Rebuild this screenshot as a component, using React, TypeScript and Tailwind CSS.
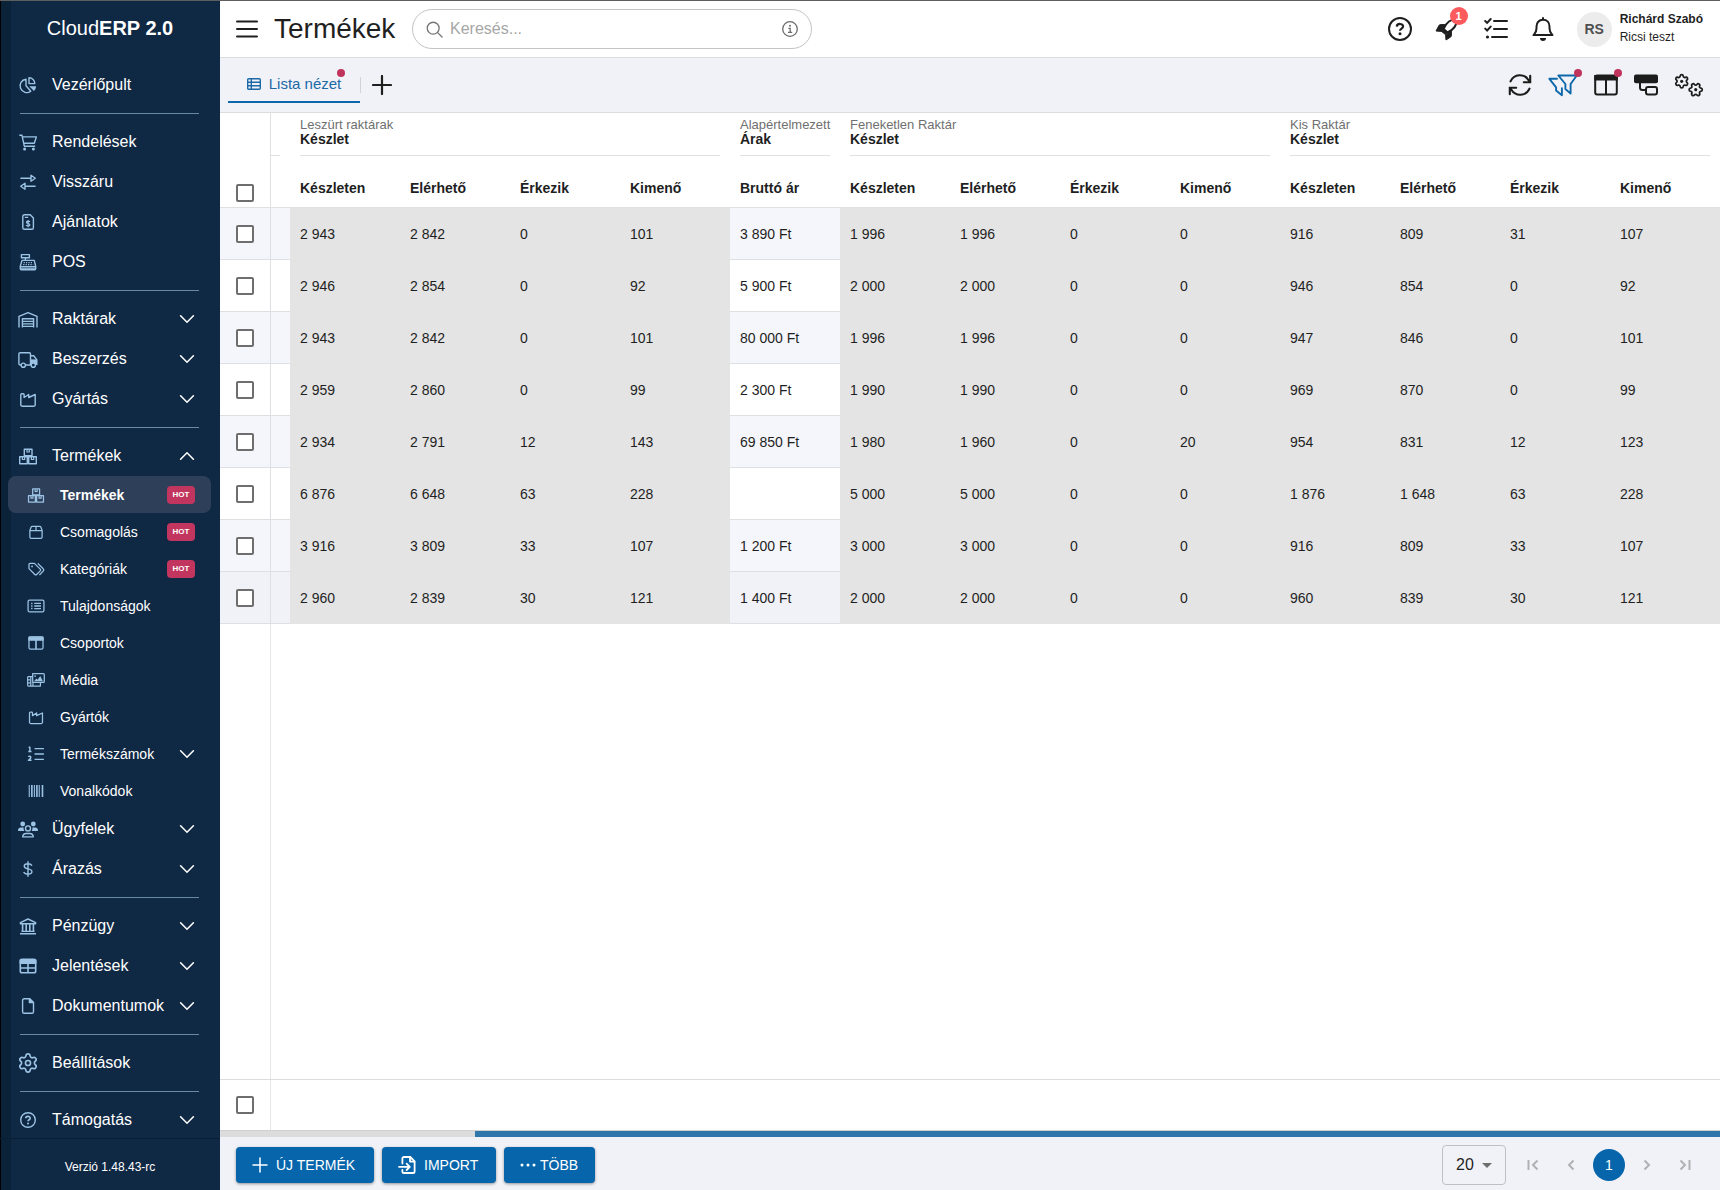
import React, { useState } from 'react';

interface IconProps {
  className?: string;
}

type IconType = React.FC<IconProps>;

// 20x20 outline icon used by the side menu
const make = (body: React.ReactNode): IconType => ({ className }) => (
  <svg
    viewBox="0 0 20 20"
    fill="none"
    stroke="currentColor"
    strokeWidth="1.4"
    strokeLinejoin="round"
    className={className}
    aria-hidden="true"
  >
    {body}
  </svg>
);

const PieIcon = make(
  <>
    <path d="M8 4.2A6.7 6.7 0 1 0 12.8 16.2L8 10.8Z" />
    <path d="M11 2.8v5.8h5.8A5.8 5.8 0 0 0 11 2.8Z" />
    <path d="M11.3 11.2h6.9a7 7 0 0 1-2.3 4.8Z" fill="currentColor" stroke="none" />
  </>
);
const CartIcon = make(
  <>
    <path d="M1.3 3.3H4l2.3 10.9h10.9M4.4 4.9h14l-2.1 6.4H5.8" />
    <circle cx="6.6" cy="17.1" r="1.5" fill="currentColor" stroke="none" />
    <circle cx="15.4" cy="17.1" r="1.5" fill="currentColor" stroke="none" />
  </>
);
const SwapIcon = make(<path d="M2.4 6.2H13M13 3.2l4.3 3-4.3 3ZM17.6 14.2H7M7 11.2l-4.3 3 4.3 3Z" />);
const InvoiceIcon = make(
  <>
    <path d="M6.4 2.7h5.8l3.2 3.2v9.8a1.6 1.6 0 0 1-1.6 1.6H6.4a1.6 1.6 0 0 1-1.6-1.6V4.3a1.6 1.6 0 0 1 1.6-1.6Z" />
    <path
      d="M6.8 5.3h3.4M12 9.9c-.5-.5-1.1-.7-1.9-.7-2.2 0-2.2 1.9 0 2.3 2.4.4 2.3 2.5 0 2.5-.9 0-1.6-.3-2.1-.8M10.1 8v7.2"
      strokeWidth="1.2"
    />
  </>
);
const RegisterIcon = make(
  <>
    <path d="M3.4 2.6h8v3.2h-8ZM7.4 5.8v2.6M4 8.4h12.2l1.5 5.8v2.6a.9.9 0 0 1-.9.9H3.2a.9.9 0 0 1-.9-.9v-2.6L4 8.4ZM2.4 14.6h15.2" />
    <path d="M5.6 10.6h9.2M5.2 12.6h10" strokeDasharray="1.2 1.2" strokeWidth="1.1" />
    <path d="M2.6 16.2h14.8" strokeWidth="1.2" />
  </>
);
const WarehouseIcon = make(
  <path d="M1 18.6V7.4L10 3.7l9 3.7v11.2M4.4 18.6V9.8h11.2v8.8M4.4 12.4h11.2M4.4 14.9h11.2M4.4 17.4h11.2" />
);
const TruckIcon = make(
  <>
    <path d="M3 16h-.8A1.3 1.3 0 0 1 .9 14.7V5a1.3 1.3 0 0 1 1.3-1.3h9A1.3 1.3 0 0 1 12.5 5v11H7.6M12.5 6.8h3.2l3 3.8V16" />
    <path d="M12.5 10.4h6.7V16h-6.7Z" fill="currentColor" stroke="none" />
    <circle cx="5.3" cy="16.2" r="2.1" />
    <circle cx="15.3" cy="16.2" r="2.1" fill="#0f2844" />
  </>
);
const FactoryIcon = make(
  <path d="M2.8 5.6a.9.9 0 0 1 .9-.9h1.5a.9.9 0 0 1 .9.9v2.9l4.6-3v3l6.5-3v10.2a1.6 1.6 0 0 1-1.6 1.6H4.4a1.6 1.6 0 0 1-1.6-1.6Z" />
);
const BoxesIcon = make(
  <>
    <path d="M6.3 3.2H14v6.6H6.3ZM1.7 10.8h7.6v7H1.7ZM10.7 10.8h7.6v7h-7.6Z" />
    <path d="M9 3.2V6h2.3V3.2M4.4 10.8v2.7h2.3v-2.7M13.4 10.8v2.7h2.3v-2.7" strokeWidth="1.2" />
  </>
);
const BoxIcon = make(
  <path d="M3.2 8.4 4.6 4.5a1.2 1.2 0 0 1 1.1-.8h8.6a1.2 1.2 0 0 1 1.1.8l1.4 3.9v7.2a1.4 1.4 0 0 1-1.4 1.4H4.6a1.4 1.4 0 0 1-1.4-1.4ZM3.2 8.4h13.6M10 3.7v4.7" />
);
const TagsIcon = make(
  <>
    <path d="M2.2 4.9v4.7l6.5 6.5a1.4 1.4 0 0 0 2 0l4-4a1.4 1.4 0 0 0 0-2L8.2 3.7H3.4a1.2 1.2 0 0 0-1.2 1.2Z" />
    <path d="m12 3.8 6 6a1.9 1.9 0 0 1 0 2.6l-4.2 4.3" />
    <circle cx="5.6" cy="7.1" r="1" fill="currentColor" stroke="none" />
  </>
);
const ListBoxIcon = make(
  <>
    <rect x="1.2" y="3.5" width="17.6" height="13" rx="1.6" />
    <path d="M8 7.2h7.5M8 10h7.5M8 12.8h7.5" />
    <path d="M4.6 7.2h1.5M4.6 10h1.5M4.6 12.8h1.5" strokeWidth="1.6" />
  </>
);
const ColumnsIcon = make(
  <>
    <rect x="2.2" y="3.3" width="15.6" height="13.6" rx="1.6" />
    <path d="M2.2 3.6h15.6v3.2H2.2Z" fill="currentColor" />
    <path d="M10 6v10.9" strokeWidth="1.8" />
  </>
);
const MediaIcon = make(
  <>
    <path d="M6.3 2.9h11.9a1 1 0 0 1 1 1v7.7a1 1 0 0 1-1 1H7.3a1 1 0 0 1-1-1Z" />
    <path d="m7.8 11.3 2.6-3 1.3 1.3 3-4 3 5.7Z" fill="currentColor" stroke="none" />
    <circle cx="9" cy="5.6" r="1" fill="currentColor" stroke="none" />
    <path
      d="M6.3 6.2H1.7a1 1 0 0 0-1 1v8.6a1 1 0 0 0 1 1h13.2v-4.2M4.2 6.2v10.6M.7 9.8h3.5M.7 13.2h3.5M6.6 12.6v4.2"
      strokeWidth="1.3"
    />
  </>
);
const NumbersIcon = make(
  <>
    <path d="M8.4 4h10.4M8.4 10h10.4M8.4 16h10.4" strokeWidth="1.6" />
    <path d="M1.8 2.6h1.4v4.5M1.4 7.2H5M1.5 13.3c.7-1.2 3-1 2.7.6-.2 1-1.8 2-2.6 3.1H5" strokeWidth="1.6" />
  </>
);
const BarcodeIcon = make(
  <>
    <path d="M2.5 3.2v13.6M8.2 3.2v13.6M13.6 3.2v13.6" strokeWidth="1.2" />
    <path d="M5.4 3.2v13.6M11 3.2v13.6M17.2 3.2v13.6" strokeWidth="1.8" />
  </>
);
const UsersIcon = make(
  <>
    <circle cx="4.7" cy="5" r="2.4" fill="currentColor" stroke="none" />
    <circle cx="15.3" cy="5" r="2.4" fill="currentColor" stroke="none" />
    <path
      d="M0 11.4a3 3 0 0 1 3-3h2.6a5 5 0 0 0 .7 3.5H.4ZM20 11.4a3 3 0 0 0-3-3h-2.6a5 5 0 0 1-.7 3.5h5.9Z"
      fill="currentColor"
      stroke="none"
    />
    <circle cx="10" cy="9.4" r="2.5" />
    <path d="M4.7 17.9a3.6 3.6 0 0 1 3.6-3.4h3.4a3.6 3.6 0 0 1 3.6 3.4Z" />
  </>
);
const DollarIcon = make(
  <path d="M14 6.7c-.8-1.3-2.2-1.9-4-1.9-5 0-5 4.4-.2 5.1 5.6.8 5.3 5.3.2 5.3-2 0-3.6-.7-4.4-2M10 2.2v15.6" />
);
const BankIcon = make(
  <>
    <path d="M2.4 7.8V6.6L10 3l7.6 3.6v1.2ZM3.4 15.4h13.2M2 17.7h16" />
    <path d="M4.6 8v7M8.2 8v7M11.8 8v7M15.4 8v7" strokeWidth="1.6" />
  </>
);
const TableIcon = make(
  <>
    <rect x="2.3" y="3.3" width="15.4" height="13.4" rx="1.8" strokeWidth="1.6" />
    <path d="M2.3 4h15.4v3.2H2.3Z" fill="currentColor" />
    <path d="M10 7v9.7M2.3 12h15.4" strokeWidth="1.6" />
  </>
);
const FileIcon = make(
  <>
    <path d="M6.2 2.7h5.6l3.7 3.7v9.3a1.6 1.6 0 0 1-1.6 1.6H6.2a1.6 1.6 0 0 1-1.6-1.6V4.3a1.6 1.6 0 0 1 1.6-1.6Z" />
    <path d="M11.4 2.9v3.7h3.9Z" fill="currentColor" />
  </>
);
const HelpIcon = make(
  <>
    <circle cx="10" cy="10" r="7.3" />
    <path d="M7.7 8.2c.1-2.5 4.6-2.4 4.5 0 0 1.5-2.2 1.6-2.2 3.1" strokeWidth="1.6" />
    <circle cx="10" cy="13.5" r="1" fill="currentColor" stroke="none" />
  </>
);

// six-lobed gear outline on a 24x24 grid
const GEAR_PATH =
  'M9.671 4.136a2.34 2.34 0 0 1 4.659 0 2.34 2.34 0 0 0 3.319 1.915 2.34 2.34 0 0 1 2.33 4.033 2.34 2.34 0 0 0 0 3.831 2.34 2.34 0 0 1-2.33 4.033 2.34 2.34 0 0 0-3.319 1.915 2.34 2.34 0 0 1-4.659 0 2.34 2.34 0 0 0-3.32-1.915 2.34 2.34 0 0 1-2.33-4.033 2.34 2.34 0 0 0 0-3.831A2.34 2.34 0 0 1 6.35 6.051a2.34 2.34 0 0 0 3.319-1.915';

const GearIcon: IconType = ({ className }) => (
  <svg viewBox="1 1 22 22" fill="none" stroke="currentColor" strokeWidth="1.8" className={className} aria-hidden="true">
    <path d={GEAR_PATH} />
    <circle cx="12" cy="12" r="2.8" />
  </svg>
);

interface SubItem {
  label: string;
  icon: IconType;
  hot?: boolean;
  active?: boolean;
  expand?: boolean;
}

interface MenuItem {
  label: string;
  icon: IconType;
  expand?: 'down' | 'up';
  children?: SubItem[];
}

const PRODUCT_ITEMS: SubItem[] = [
  { label: 'Termékek', icon: BoxesIcon, hot: true, active: true },
  { label: 'Csomagolás', icon: BoxIcon, hot: true },
  { label: 'Kategóriák', icon: TagsIcon, hot: true },
  { label: 'Tulajdonságok', icon: ListBoxIcon },
  { label: 'Csoportok', icon: ColumnsIcon },
  { label: 'Média', icon: MediaIcon },
  { label: 'Gyártók', icon: FactoryIcon },
  { label: 'Termékszámok', icon: NumbersIcon, expand: true },
  { label: 'Vonalkódok', icon: BarcodeIcon },
];

const MENU: MenuItem[][] = [
  [{ label: 'Vezérlőpult', icon: PieIcon }],
  [
    { label: 'Rendelések', icon: CartIcon },
    { label: 'Visszáru', icon: SwapIcon },
    { label: 'Ajánlatok', icon: InvoiceIcon },
    { label: 'POS', icon: RegisterIcon },
  ],
  [
    { label: 'Raktárak', icon: WarehouseIcon, expand: 'down' },
    { label: 'Beszerzés', icon: TruckIcon, expand: 'down' },
    { label: 'Gyártás', icon: FactoryIcon, expand: 'down' },
  ],
  [
    { label: 'Termékek', icon: BoxesIcon, expand: 'up', children: PRODUCT_ITEMS },
    { label: 'Ügyfelek', icon: UsersIcon, expand: 'down' },
    { label: 'Árazás', icon: DollarIcon, expand: 'down' },
  ],
  [
    { label: 'Pénzügy', icon: BankIcon, expand: 'down' },
    { label: 'Jelentések', icon: TableIcon, expand: 'down' },
    { label: 'Dokumentumok', icon: FileIcon, expand: 'down' },
  ],
  [{ label: 'Beállítások', icon: GearIcon }],
  [{ label: 'Támogatás', icon: HelpIcon, expand: 'down' }],
];

const STOCK_COLUMNS = ['Készleten', 'Elérhető', 'Érkezik', 'Kimenő'];

const GROUPS = [
  { caption: 'Leszürt raktárak', title: 'Készlet', columns: STOCK_COLUMNS },
  { caption: 'Alapértelmezett', title: 'Árak', columns: ['Bruttó ár'] },
  { caption: 'Feneketlen Raktár', title: 'Készlet', columns: STOCK_COLUMNS },
  { caption: 'Kis Raktár', title: 'Készlet', columns: STOCK_COLUMNS },
];

const PRICE_INDEX = 4;

const ROWS: string[][] = [
  ['2 943', '2 842', '0', '101', '3 890 Ft', '1 996', '1 996', '0', '0', '916', '809', '31', '107'],
  ['2 946', '2 854', '0', '92', '5 900 Ft', '2 000', '2 000', '0', '0', '946', '854', '0', '92'],
  ['2 943', '2 842', '0', '101', '80 000 Ft', '1 996', '1 996', '0', '0', '947', '846', '0', '101'],
  ['2 959', '2 860', '0', '99', '2 300 Ft', '1 990', '1 990', '0', '0', '969', '870', '0', '99'],
  ['2 934', '2 791', '12', '143', '69 850 Ft', '1 980', '1 960', '0', '20', '954', '831', '12', '123'],
  ['6 876', '6 648', '63', '228', '', '5 000', '5 000', '0', '0', '1 876', '1 648', '63', '228'],
  ['3 916', '3 809', '33', '107', '1 200 Ft', '3 000', '3 000', '0', '0', '916', '809', '33', '107'],
  ['2 960', '2 839', '30', '121', '1 400 Ft', '2 000', '2 000', '0', '0', '960', '839', '30', '121'],
];

const Chevron: React.FC<{ up?: boolean }> = ({ up }) => (
  <svg
    viewBox="0 0 16 10"
    fill="none"
    stroke="#fff"
    strokeWidth="1.6"
    strokeLinecap="round"
    className="h-[10px] w-4 shrink-0"
    aria-hidden="true"
  >
    <path d={up ? 'M1.6 8.2 8 1.8l6.4 6.4' : 'M1.6 1.8 8 8.2l6.4-6.4'} />
  </svg>
);

const Sidebar: React.FC = () => (
  <aside className="flex w-[220px] shrink-0 flex-col bg-[linear-gradient(to_right,#000_1px,#0b2339_1px,#0b2339_11px,#0f2844_11px)] text-white">
    <div className="flex h-16 shrink-0 items-start justify-center pt-[13px] text-xl leading-[28px]">
      <span>Cloud<b>ERP 2.0</b></span>
    </div>
    <nav className="min-h-0 flex-1 overflow-hidden">
      {MENU.map((section, index) => (
        <React.Fragment key={index}>
          {index > 0 && <hr className="ml-5 mr-[21px] my-2 border-[#6a89a5]" />}
          {section.map((item) => (
            <React.Fragment key={item.label}>
              <a href="#" className="flex h-10 items-center pl-[18px] pr-[25px]">
                <item.icon className="mr-[14px] size-5 shrink-0 text-[#9cc3e4]" />
                <span className="flex-1 text-base">{item.label}</span>
                {item.expand && <Chevron up={item.expand === 'up'} />}
              </a>
              {item.children?.map((sub) => (
                <a
                  key={sub.label}
                  href="#"
                  className={`ml-2 mr-[9px] flex h-[37px] items-center rounded-lg pl-[19px] pr-4 text-sm ${sub.active ? 'bg-[#2e3f5a] font-bold' : ''}`}
                >
                  <sub.icon className="mr-[15px] size-[18px] shrink-0 text-[#9cc3e4]" />
                  <span className="flex-1">{sub.label}</span>
                  {sub.hot && (
                    <span className="flex h-[18px] w-7 items-center justify-center rounded bg-[#c2355f] text-[8px] font-bold">HOT</span>
                  )}
                  {sub.expand && <Chevron />}
                </a>
              ))}
            </React.Fragment>
          ))}
        </React.Fragment>
      ))}
    </nav>
    <div className="flex h-[52px] shrink-0 items-center justify-center border-t border-[#0a1f36] pt-1 text-xs">Verzió 1.48.43-rc</div>
  </aside>
);

const Header: React.FC = () => (
  <header className="flex h-[57px] shrink-0 items-center border-b border-[#dcdcdc] pl-4 pr-[17px]">
    <button type="button" aria-label="Menü" className="mr-4">
      <svg viewBox="0 0 22 18" className="h-[18px] w-[22px]" stroke="#1f1f1f" strokeWidth="2" strokeLinecap="round">
        <path d="M1 1.5h20M1 9h20M1 16.5h20" />
      </svg>
    </button>
    <h1 className="w-[138px] text-[28px] leading-9">Termékek</h1>
    <label className="flex h-10 w-[400px] items-center rounded-full border border-[#c4c4c4] pl-[13px] pr-[13px]">
      <svg
        viewBox="0 0 18 18"
        className="mr-[7px] size-[17px] shrink-0"
        fill="none"
        stroke="#757575"
        strokeWidth="1.4"
        strokeLinecap="round"
      >
        <circle cx="7.6" cy="7.6" r="6.3" />
        <path d="m12.3 12.3 4.7 4.7" />
      </svg>
      <input
        type="text"
        aria-label="Keresés"
        placeholder="Keresés..."
        className="min-w-0 flex-1 text-base outline-none placeholder:text-[#a6a6a6]"
      />
      <svg viewBox="0 0 16 16" className="size-4 shrink-0" fill="none" stroke="#6b6b6b" strokeWidth="1.3">
        <circle cx="8" cy="8" r="7.3" />
        <path d="M6.4 7.3h1.8v4M6 11.4h4.2" />
        <circle cx="8" cy="4.7" r="1" fill="#6b6b6b" stroke="none" />
      </svg>
    </label>
    <div className="ml-auto flex items-center">
      <button type="button" aria-label="Súgó" className="mr-[23px]">
        <svg viewBox="0 0 24 24" className="size-6" fill="none" stroke="#1f1f1f" strokeWidth="2">
          <circle cx="12" cy="12" r="11" />
          <path d="M8.8 9.6c.1-3.600 6.400-3.400 6.300 0 0 2.100-3.100 2.100-3.100 4.200" strokeWidth="2.2" />
          <circle cx="12" cy="16.8" r="1.5" fill="#1f1f1f" stroke="none" />
        </svg>
      </button>
      <button type="button" aria-label="Újdonságok" className="relative mr-[25px]">
        <svg viewBox="0 0 24 24" className="size-6" fill="none" stroke="#1f1f1f" strokeWidth="2" strokeLinejoin="round">
          <path d="M8.5 12C11 6 15 2 22 2c0 7-4 11-9.5 13.5Z" />
          <path
            d="M10.5 7.6H5.3c-.6 0-1 .3-1.3.8L1 14l5.8.4M16.4 13.5v5.2c0 .6-.3 1-.8 1.300L11 23l-.4-5.300"
            fill="#1f1f1f"
            strokeWidth="1"
          />
          <path d="m6.6 14.400 4 3.300 2.400-2.200-4.500-4Z" fill="#1f1f1f" strokeWidth="1" />
        </svg>
        <span className="absolute -top-[10px] left-[15px] flex size-[18px] items-center justify-center rounded-full bg-[#fc5a5c] text-[11px] font-bold text-white">
          1
        </span>
      </button>
      <button type="button" aria-label="Feladatok" className="mr-[23px]">
        <svg viewBox="0 0 24 24" className="size-6" fill="none" stroke="#1f1f1f" strokeWidth="2" strokeLinecap="round">
          <path d="M10 4h13M10 12h13M8 20h15" />
          <path d="m1.200 4 1.900 1.900L6.700 2M1.200 11.600l1.900 1.900 3.600-3.900" />
          <circle cx="3.5" cy="20" r="1.6" fill="#1f1f1f" stroke="none" />
        </svg>
      </button>
      <button type="button" aria-label="Értesítések" className="mr-[22px]">
        <svg
          viewBox="0 0 24 24"
          className="size-6"
          fill="none"
          stroke="#1f1f1f"
          strokeWidth="2"
          strokeLinejoin="round"
          strokeLinecap="round"
        >
          <path d="M12 2.800c-4.100 0-6.500 3-6.500 6.700v1.800c0 2.200-.7 4-2.200 5.800l-.8 1h19l-.8-1c-1.500-1.800-2.200-3.600-2.200-5.800V9.500c0-3.700-2.400-6.700-6.500-6.700ZM12 1v1.700" />
          <path d="M9 21h6a3 3 0 0 1-6 0Z" fill="#1f1f1f" stroke="none" />
        </svg>
      </button>
      <div className="mr-2 flex size-[35px] items-center justify-center rounded-full bg-[#ececec] text-sm font-bold text-[#4f4f4f]">RS</div>
      <div className="pb-0.5 text-xs leading-[18px]">
        <div className="font-bold">Richárd Szabó</div>
        <div>Ricsi teszt</div>
      </div>
    </div>
  </header>
);

const Dot: React.FC = () => <span className="absolute -right-1 -top-1 size-2 rounded-full bg-[#bf335c]" />;

const Toolbar: React.FC = () => (
  <div className="flex h-[55px] shrink-0 items-center border-b border-[#dcdcdc] bg-[#f1f2f7] pl-2 pr-4">
    <button
      type="button"
      className="mb-[9px] flex h-9 w-[132px] items-center justify-center gap-2 self-end border-b-2 border-[#0d68ab] text-[15px] text-[#1c69a6]"
    >
      <svg viewBox="0 0 14 12" className="h-3 w-[14px]" fill="none" stroke="#1c69a6" strokeWidth="1.4">
        <rect x=".7" y=".7" width="12.6" height="10.6" rx="1" />
        <path d="M.7 4.200h12.600M.7 7.800h12.600M4.300.7v10.600" />
      </svg>
      <span className="relative">
        Lista nézet
        <Dot />
      </span>
    </button>
    <span className="h-4 w-px bg-[#d2d3d8]" />
    <button type="button" aria-label="Új nézet" className="ml-[11px]">
      <svg viewBox="0 0 20 20" className="size-5" stroke="#1f1f1f" strokeWidth="2.2" strokeLinecap="round">
        <path d="M10 1v18M1 10h18" />
      </svg>
    </button>
    <div className="ml-auto flex items-center text-[#1c1c1c]">
      <button type="button" aria-label="Frissítés" className="mr-4">
        <svg viewBox="0 0 24 24" className="size-6" fill="none" stroke="currentColor" strokeWidth="2.1" strokeLinecap="round">
          <path d="M2.500 8.400C6 .6 16.400.2 20.600 7.200l.9 1.200M22.200 2.800v6.400h-6.400M21.500 15.600C18 23.400 7.600 23.800 3.400 16.800l-.9-1.200M1.800 21.200v-6.400h6.400" />
        </svg>
      </button>
      <button type="button" aria-label="Szűrők" className="relative mr-4">
        <svg
          viewBox="0 0 30 24"
          className="h-6 w-[30px]"
          fill="none"
          stroke="#0d68ab"
          strokeWidth="1.9"
          strokeLinejoin="round"
          strokeLinecap="round"
        >
          <path d="M10.300 2.500h18.500L22.600 11v9.600l-5.200-4.600v-5Z" />
          <path d="M9 5.800H1.400l6.700 8.600v3.200l5.800 4.600v-7" />
        </svg>
        <Dot />
      </button>
      <button type="button" aria-label="Oszlopok" className="relative mr-4">
        <svg viewBox="0 0 24 24" className="size-6" fill="none" stroke="currentColor" strokeWidth="2">
          <rect x="1.2" y="2.6" width="21.6" height="18.8" rx="2" />
          <path d="M1.200 3h21.600v3.500H1.200Z" fill="currentColor" />
          <path d="M12 6v15.400" />
        </svg>
        <Dot />
      </button>
      <button type="button" aria-label="Csoportosítás" className="mr-4">
        <svg viewBox="0 0 24 24" className="size-6" fill="none" stroke="currentColor" strokeWidth="2">
          <rect x="0" y="1.6" width="24" height="8.6" rx="2" fill="currentColor" stroke="none" />
          <path d="M6 10v4.500a2.500 2.500 0 0 0 2.500 2.500H12" />
          <rect x="12" y="14" width="11" height="7.4" rx="2" />
        </svg>
      </button>
      <button type="button" aria-label="Beállítások">
        <svg viewBox="0 0 30 24" className="h-6 w-[30px]" fill="none" stroke="currentColor" strokeWidth="2.6">
          <g transform="translate(7.7 8.3) scale(.66) translate(-12 -12)">
            <path d={GEAR_PATH} />
            <circle cx="12" cy="12" r="2.4" fill="currentColor" stroke="none" />
          </g>
          <g transform="translate(21.7 16.7) rotate(30) scale(.66) translate(-12 -12)">
            <path d={GEAR_PATH} />
            <circle cx="12" cy="12" r="2.4" fill="currentColor" stroke="none" />
          </g>
        </svg>
      </button>
    </div>
  </div>
);

const Checkbox: React.FC<{ label: string }> = ({ label }) => (
  <input
    type="checkbox"
    aria-label={label}
    className="block size-[18px] shrink-0 appearance-none rounded-xs border-2 border-[#6e6e6e] bg-white checked:bg-[#0668ad]"
  />
);

const ProductTable: React.FC = () => (
  <table className="w-full shrink-0 table-fixed border-separate border-spacing-0 text-left text-sm">
    <colgroup>
      <col className="w-[51px]" />
      <col className="w-[19px]" />
      {ROWS[0].map((_, i) => (
        <col key={i} />
      ))}
    </colgroup>
    <thead>
      <tr className="h-[43px]">
        <td rowSpan={2} className="border-b border-r border-[#e0e0e0] pb-[5px] pl-4 align-bottom">
          <Checkbox label="Összes kijelölése" />
        </td>
        <td className="pr-[10px] align-bottom">
          <div className="border-b border-[#e0e0e0]" />
        </td>
        {GROUPS.map((group) => (
          <th key={group.caption} colSpan={group.columns.length} className="px-[10px] pt-1 align-top">
            <div className="h-[39px] whitespace-nowrap border-b border-[#e0e0e0]">
              <div className="text-[13px] font-normal leading-4 text-[#6f6f6f]">{group.caption}</div>
              <div className="leading-3">{group.title}</div>
            </div>
          </th>
        ))}
      </tr>
      <tr className="h-[52px]">
        <td className="border-b border-[#e0e0e0]" />
        {GROUPS.flatMap((group) =>
          group.columns.map((column) => (
            <th key={group.caption + column} className="border-b border-[#e0e0e0] px-[10px] pt-3">
              {column}
            </th>
          ))
        )}
      </tr>
    </thead>
    <tbody>
      {ROWS.map((row, index) => (
        <tr
          key={index}
          className={`h-[52px] ${index === ROWS.length - 1 ? 'bg-[#f1f2f7]' : index % 2 === 0 ? 'bg-[#f5f6fb]' : 'bg-white'}`}
        >
          <td className="border-b border-r border-[#dedfe2] pl-4">
            <Checkbox label={`${index + 1}. sor kijelölése`} />
          </td>
          <td className="border-b border-[#dedfe2]" />
          {row.map((value, col) => (
            <td
              key={col}
              className={`border-b px-[10px] ${col === PRICE_INDEX ? 'border-[#dedfe2]' : 'border-[#e4e4e4] bg-[#e4e4e4]'}`}
            >
              {value}
            </td>
          ))}
        </tr>
      ))}
    </tbody>
  </table>
);

const PageButton: React.FC<{ label: string; d: string }> = ({ label, d }) => (
  <button type="button" aria-label={label} className="flex size-8 items-center justify-center">
    <svg viewBox="0 0 16 16" className="size-4" fill="none" stroke="#b0b1b5" strokeWidth="2">
      <path d={d} />
    </svg>
  </button>
);

const Footer: React.FC = () => {
  const [pageSize, setPageSize] = useState('20');

  const buttonClass =
    'flex h-9 items-center rounded bg-[#0766ab] px-4 text-sm text-white shadow-[0_1px_3px_rgba(0,0,0,0.4)]';

  return (
    <footer className="flex h-[53px] shrink-0 items-center gap-2 bg-[#f1f2f7] pl-4 pr-[19px] pt-0.5">
      <button type="button" className={`${buttonClass} min-w-[138px] gap-2`}>
        <svg viewBox="0 0 16 16" className="size-4" stroke="#fff" strokeWidth="1.5" strokeLinecap="round">
          <path d="M8 1v14M1 8h14" />
        </svg>
        ÚJ TERMÉK
      </button>
      <button type="button" className={`${buttonClass} min-w-[114px] gap-2`}>
        <svg
          viewBox="0 0 18 18"
          className="size-[18px]"
          fill="none"
          stroke="#fff"
          strokeWidth="1.8"
          strokeLinecap="round"
          strokeLinejoin="round"
        >
          <path d="M4.400 7.500V2.600A1.600 1.600 0 0 1 6 1h6.300l4.300 4.300v10.100a1.600 1.600 0 0 1-1.600 1.600H6a1.600 1.600 0 0 1-1.600-1.600V14" />
          <path d="M1 10.800h10.500M8.600 7.600l3.200 3.200L8.600 14M12 1.200v4.400h4.400" />
        </svg>
        IMPORT
      </button>
      <button type="button" className={`${buttonClass} min-w-[91px] gap-1`}>
        <svg viewBox="0 0 16 4" className="h-1 w-4" fill="#fff">
          <circle cx="2" cy="2" r="1.5" />
          <circle cx="8" cy="2" r="1.5" />
          <circle cx="14" cy="2" r="1.5" />
        </svg>
        TÖBB
      </button>
      <div className="ml-auto flex items-center gap-[6px]">
        <div className="relative mr-[5px]">
          <select
            aria-label="Sorok száma"
            value={pageSize}
            onChange={(e) => setPageSize(e.target.value)}
            className="block h-10 w-16 appearance-none rounded border border-[#bfc0c4] bg-transparent pl-[13px] text-base"
          >
            <option>20</option>
            <option>50</option>
            <option>100</option>
          </select>
          <svg
            viewBox="0 0 10 5"
            className="pointer-events-none absolute right-[14px] top-[18px] h-[5px] w-[10px]"
            fill="#6e6e6e"
          >
            <path d="M0 0h10L5 5Z" />
          </svg>
        </div>
        <PageButton label="Első oldal" d="M3.500 3v10M12.500 3.500 8 8l4.500 4.500" />
        <PageButton label="Előző oldal" d="M10.500 3.500 6 8l4.500 4.500" />
        <button type="button" className="size-8 rounded-full bg-[#0766ab] text-sm text-white">1</button>
        <PageButton label="Következő oldal" d="M5.500 3.500 10 8l-4.500 4.500" />
        <PageButton label="Utolsó oldal" d="M12.500 3v10M3.500 3.500 8 8l-4.500 4.500" />
      </div>
    </footer>
  );
};

const App: React.FC = () => (
  <div className="flex h-screen overflow-hidden border-t border-[#5f5f5f] bg-white font-['Liberation_Sans',Arial,sans-serif] text-[#1f1f1f]">
    <Sidebar />
    <main className="flex min-w-0 flex-1 flex-col">
      <Header />
      <Toolbar />
      <ProductTable />
      <div className="w-[51px] flex-1 border-r border-[#e6e6e6]" />
      <div className="h-[51px] shrink-0 border-t border-[#dcdcdc]">
        <div className="flex h-full w-[51px] items-center border-r border-[#e6e6e6] pl-4">
          <Checkbox label="Összesítő sor kijelölése" />
        </div>
      </div>
      {/* horizontal scroll track */}
      <div className="h-[7px] shrink-0 border-t border-[#d0d0d0] bg-[#dcdcdc]">
        <div className="ml-auto h-full w-[83%] bg-[#2f76ab]" />
      </div>
      <Footer />
    </main>
  </div>
);

export default App;
